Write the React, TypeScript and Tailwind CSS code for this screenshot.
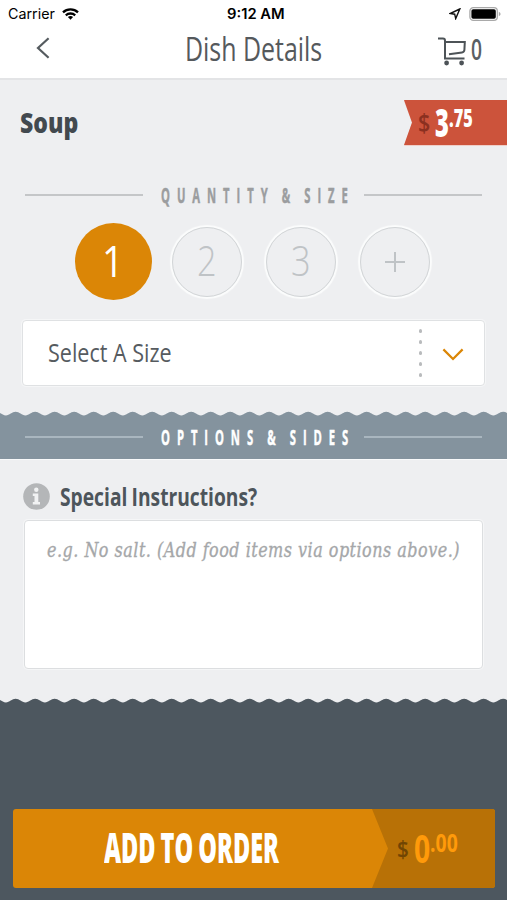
import React, { useLayoutEffect, useRef, useState } from 'react';

type FitTextProps = {
  children: string;
  width: number;
  className?: string;
};

// Squeezes a line of text horizontally to the given width
const FitText = ({ children, width, className = '' }: FitTextProps) => {
  const ref = useRef<HTMLSpanElement>(null);
  const [scale, setScale] = useState(1);

  useLayoutEffect(() => {
    if (ref.current) {
      setScale(width / ref.current.offsetWidth);
    }
  }, [width, children]);

  return (
    <span className="block shrink-0" style={{ width }}>
      <span
        ref={ref}
        className={`block w-max whitespace-nowrap origin-left ${className}`}
        style={{ transform: `scaleX(${scale})` }}
      >
        {children}
      </span>
    </span>
  );
};

const WAVE_COUNT = 27;
const WAVE_WIDTH = 19.5;

const wavePath = () => {
  let d = 'M-13.6 4.4';
  for (let i = 0; i < WAVE_COUNT + 1; i++) {
    d += ` c3.6 0 6 -3.6 ${WAVE_WIDTH / 2} -3.6 s6.2 3.6 ${WAVE_WIDTH / 2} 3.6`;
  }
  return `${d} V8 H-14 Z`;
};

const WaveEdge = ({ className }: { className: string }) => (
  <svg width="507" height="6" viewBox="0 0 507 6" className={`block ${className}`}>
    <path d={wavePath()} fill="currentColor" />
  </svg>
);

const SectionTitle = ({ title, lineClass, textClass }: { title: string; lineClass: string; textClass: string }) => (
  <div className="flex items-center h-5 px-[25px]">
    <div className={`w-[118px] h-[2px] ${lineClass}`}></div>
    <div className="flex-1 pl-[18px]">
      <FitText width={194} className={`text-[21px] leading-5 font-bold tracking-[13px] [word-spacing:-5px] [-webkit-text-stroke:0.5px_currentColor] ${textClass}`}>
        {title}
      </FitText>
    </div>
    <div className={`w-[118px] h-[2px] ${lineClass}`}></div>
  </div>
);

const StatusBar = () => (
  <div className="flex items-center justify-between h-[27px] pl-2 pr-[6px] text-black font-['Inter',sans-serif]">
    <div className="flex items-center gap-[7px] w-[219px]">
      <FitText width={47} className="text-[14px]">Carrier</FitText>
      <svg width="17" height="12" viewBox="0 0 17 12" fill="none" stroke="#000" strokeWidth="2.3">
        <path d="M1 4.4 C5.2 0.4 11.8 0.4 16 4.4" />
        <path d="M3.8 7.3 C6.4 4.9 10.6 4.9 13.2 7.3" />
        <path d="M5.9 8.9 Q8.5 6.9 11.1 8.9 L8.5 11.8 Z" fill="#000" stroke="none" />
      </svg>
    </div>
    <FitText width={58} className="text-[14px] font-semibold">9:12 AM</FitText>
    <div className="flex items-center justify-end gap-[8px] flex-1">
      <svg width="12" height="12" viewBox="0 0 12 12" fill="none" stroke="#111" strokeWidth="1.4" strokeLinejoin="miter">
        <path d="M10.8 1 L1.2 5.5 L5.7 6.2 L6.7 10.6 Z" />
      </svg>
      <svg width="32" height="14" viewBox="0 0 32 14">
        <rect x="0.9" y="0.7" width="27.4" height="12.6" rx="3.4" fill="#fff" stroke="#a9a9a9" strokeWidth="1.3" />
        <rect x="2.4" y="2.2" width="24.4" height="9.6" rx="1.8" fill="#000" />
        <path d="M29.8 4.8 q1.8 0.8 1.8 2.2 t-1.8 2.2 Z" fill="#a9a9a9" />
      </svg>
    </div>
  </div>
);

const Header = () => (
  <header className="h-[80px] bg-white border-b-2 border-[#e3e4e6]">
    <StatusBar />
    <div className="flex items-center h-[42px] pl-9">
      <svg width="14" height="22" viewBox="0 0 14 22" fill="none" stroke="#555b5f" strokeWidth="2.2">
        <path d="M12.6 1.2 L2 11 L12.6 20.8" />
      </svg>
      <div className="pl-[135px] pt-px">
        <FitText width={137} className="text-[32px] leading-[42px] font-[370] text-[#55595c]">Dish Details</FitText>
      </div>
      <svg width="30" height="30" viewBox="0 0 30 30" fill="none" stroke="#4d5357" strokeWidth="2" className="ml-[115px] mt-[5px]">
        <path d="M1 2.6 H6 Q8 2.6 8 4.8 V22.4 H27.5" />
        <path d="M8 6 H27.8 L27.4 14 Q27.2 16.2 25 16.5 L12 18.3" />
        <circle cx="9.6" cy="27" r="2.4" fill="#4d5357" stroke="none" />
        <circle cx="24.6" cy="27" r="2.4" fill="#4d5357" stroke="none" />
      </svg>
      <div className="pl-[4px] pt-[2px]">
        <FitText width={11} className="text-[28px] leading-[42px] font-semibold text-[#5a6064]">0</FitText>
      </div>
    </div>
  </header>
);

const PriceTag = () => (
  <div className="relative flex w-[103px] h-[45px]">
    <svg width="103" height="46" viewBox="0 0 103 46" className="absolute left-0 top-0">
      <path d="M0 1 H103 V46 H0 L8 23 Z" fill="#efcfc9" />
      <path d="M0 0 H103 V45 H0 L8 22.5 Z" fill="#cc533b" />
    </svg>
    <div className="relative flex pl-[14px]">
      <div className="pt-[8px]">
        <FitText width={12} className="text-[25px] leading-7 font-semibold text-[#8b3020]">$</FitText>
      </div>
      <div className="pl-[5px] pt-[2px]">
        <FitText width={14} className="text-[39px] leading-10 font-extrabold text-white">3</FitText>
      </div>
      <div className="pt-[3px]">
        <FitText width={24} className="text-[25px] leading-7 font-extrabold text-white">.75</FitText>
      </div>
    </div>
  </div>
);

const quantities = ['2', '3'];

const QuantityPicker = () => (
  <div className="flex items-center h-[77px] pl-[66px] mt-[18px]">
    <div className="flex justify-center w-[94px]">
      <button className="flex items-center justify-center w-[77px] h-[77px] pb-[2px] rounded-full bg-[#db8606]">
        <FitText width={22} className="text-[43px] leading-[60px] text-white">1</FitText>
      </button>
    </div>
    {quantities.map((quantity) => (
      <div key={quantity} className="flex justify-center w-[94px]">
        <button className="flex items-center justify-center w-[70px] h-[70px] pb-[3px] rounded-full border border-[#d2d5d7] shadow-[0_0_1px_2px_#fbfcfc]">
          <FitText width={20} className="text-[43px] leading-[60px] font-light text-[#bfc3c6]">{quantity}</FitText>
        </button>
      </div>
    ))}
    <div className="flex justify-center w-[94px]">
      <button className="flex items-center justify-center w-[70px] h-[70px] rounded-full border border-[#d2d5d7] shadow-[0_0_1px_2px_#fbfcfc]">
        <svg width="20" height="22" viewBox="0 0 20 22" stroke="#bfc3c6" strokeWidth="2">
          <path d="M0 11 H20 M10 1 V21" />
        </svg>
      </button>
    </div>
  </div>
);

const SizeSelect = () => (
  <div className="flex items-center h-[66px] mt-[20px] mx-[22px] pl-[25px] pr-[20px] bg-white border border-[#dfe1e3] rounded-[4px] shadow-[0_0_0_1px_#f5f6f7]">
    <div className="pb-[2px]">
      <FitText width={124} className="text-[25px] leading-8 text-[#565b5f]">Select A Size</FitText>
    </div>
    <div className="flex flex-col gap-[7.5px] ml-auto">
      {[0, 1, 2, 3, 4].map((dot) => (
        <div key={dot} className="w-[3.5px] h-[3.5px] rounded-full bg-[#b9bbbd]"></div>
      ))}
    </div>
    <svg width="22" height="13" viewBox="0 0 22 13" fill="none" stroke="#db8606" strokeWidth="2.2" className="ml-[20px] mt-[2px]">
      <path d="M1.4 1.4 L11 11 L20.6 1.4" />
    </svg>
  </div>
);

const SpecialInstructions = () => (
  <div className="pt-[21px]">
    <div className="flex items-center h-[30px] pl-[23px] gap-[10px]">
      <svg width="27" height="27" viewBox="0 0 27 27">
        <circle cx="13.5" cy="13.5" r="13.3" fill="#b4b6b8" />
        <circle cx="13.3" cy="6.8" r="2.2" fill="#f1f2f3" />
        <path d="M9.8 10.6 H15.3 V18.9 H17 V21.4 H9.8 V18.9 H11.5 V13 H9.8 Z" fill="#f1f2f3" />
      </svg>
      <div className="pt-px">
        <FitText width={197} className="text-[24.5px] leading-7 font-bold [word-spacing:-1px] text-[#4d555b]">Special Instructions?</FitText>
      </div>
    </div>
    <div className="h-[149px] mt-[9px] mx-[24px] pl-[22px] pt-[13px] bg-white border border-[#dcdee0] rounded-[4px] shadow-[0_0_0_1px_#f5f6f7]">
      <FitText width={413} className="text-[20px] leading-8 italic tracking-[0.6px] text-[#a5a7a9] [-webkit-text-stroke:0.35px_#a5a7a9] font-['DejaVu_Serif',serif]">
        e.g. No salt. (Add food items via options above.)
      </FitText>
    </div>
  </div>
);

const OrderButton = () => (
  <div className="relative flex items-center w-[482px] h-[79px] mx-[13px] rounded-[3px] bg-[#db8606] overflow-hidden">
    <svg width="123" height="79" viewBox="0 0 123 79" className="absolute right-0 top-0">
      <path d="M0 0 H123 V79 H0 L16 39.5 Z" fill="#b87106" />
    </svg>
    <div className="relative pl-[91px] pb-[3px]">
      <FitText width={175} className="text-[43px] leading-[60px] font-extrabold [word-spacing:-2px] text-white">ADD TO ORDER</FitText>
    </div>
    <div className="relative flex pl-[118px] pb-px">
      <div className="pt-[7px]">
        <FitText width={12} className="text-[24px] leading-7 font-semibold text-[#704503]">$</FitText>
      </div>
      <div className="pl-[5px]">
        <FitText width={16} className="text-[39px] leading-10 font-bold text-[#ff9a0a]">0</FitText>
      </div>
      <div>
        <FitText width={28} className="text-[25px] leading-7 font-bold text-[#ff9a0a]">.00</FitText>
      </div>
    </div>
  </div>
);

const App = () => {
  return (
    <div className="w-[507px] h-[900px] flex flex-col overflow-hidden bg-[#eeeff1] font-['Open_Sans',sans-serif]">
      <Header />
      <div className="flex items-center justify-between h-[45px] mt-[20px] pl-[20px]">
        <div className="pb-[2px]">
          <FitText width={58} className="text-[29px] leading-[43px] font-extrabold text-[#42494f]">Soup</FitText>
        </div>
        <PriceTag />
      </div>
      <div className="mt-[40px]">
        <SectionTitle title="QUANTITY & SIZE" lineClass="bg-[#c4c6c8]" textClass="text-[#9b9d9f]" />
      </div>
      <QuantityPicker />
      <SizeSelect />

      <WaveEdge className="mt-[25px] text-[#84939e]" />
      <div className="h-[43px] pt-[10px] bg-[#84939e] border-b border-[#f8f9fa]">
        <SectionTitle title="OPTIONS & SIDES" lineClass="bg-[#a9b6bf]" textClass="text-white" />
      </div>

      <SpecialInstructions />

      <WaveEdge className="mt-[29px] text-[#4d575f]" />
      <div className="flex-1 pt-[105px] bg-[#4d575f]">
        <OrderButton />
      </div>
    </div>
  );
};

export default App;
